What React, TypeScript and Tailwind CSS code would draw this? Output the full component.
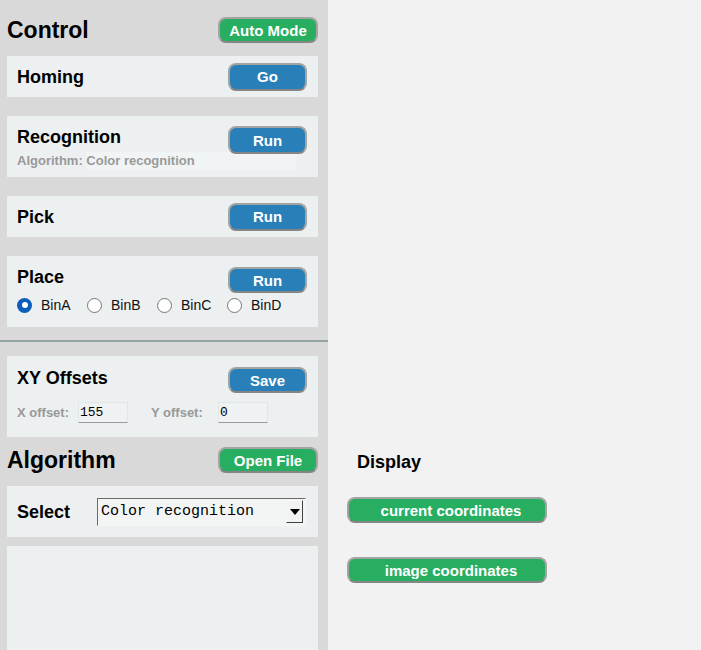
import React from "react";

const font = { fontFamily: '"Liberation Sans", Arial, sans-serif' };
const mono = { fontFamily: '"Liberation Mono", "Courier New", monospace' };

function Btn({
  label,
  color,
  className = "",
}: {
  label: string;
  color: "blue" | "green";
  className?: string;
}) {
  const bg = color === "blue" ? "bg-[#2980b9]" : "bg-[#27ae60]";
  return (
    <button
      className={`${bg} ${className} relative z-10 flex items-center justify-center rounded-lg border-2 border-[#a3a3a3] border-b-[#858585] text-[15px] font-bold leading-none text-white`}
    >
      {label}
    </button>
  );
}

function Radio({ label, checked }: { label: string; checked?: boolean }) {
  return (
    <label className="flex w-[70px] items-center">
      {checked ? (
        <span className="flex h-[15px] w-[15px] items-center justify-center rounded-full bg-[#0b5fba]">
          <span className="h-[6px] w-[6px] rounded-full bg-white" />
        </span>
      ) : (
        <span className="h-[15px] w-[15px] rounded-full border border-[#767676] bg-white" />
      )}
      <span className="ml-[9px] text-[14px] leading-none text-[#111]">{label}</span>
    </label>
  );
}

export default function App() {
  return (
    <div className="flex h-screen w-full overflow-hidden text-black" style={font}>
      {/* left control column */}
      <div className="w-[328px] shrink-0 bg-[#d9d9d9] pl-[7px] pr-[10px] pt-[17px]">
        <div className="flex h-[26px] items-center justify-between">
          <h1 className="text-[23px] font-bold leading-none">Control</h1>
          <Btn label="Auto Mode" color="green" className="h-[26px] w-[100px]" />
        </div>

        <div className="mt-[13px] flex h-[41px] items-center justify-between bg-[#ecf0f1] pl-[10px] pr-[11px]">
          <span className="text-[18px] font-bold leading-none">Homing</span>
          <Btn label="Go" color="blue" className="h-[28px] w-[79px]" />
        </div>

        <div className="mt-[19px] h-[61px] bg-[#ecf0f1] pl-[10px] pr-[11px] pt-[10px]">
          <div className="flex items-start justify-between">
            <span className="mt-[2px] text-[18px] font-bold leading-[18px]">Recognition</span>
            <Btn label="Run" color="blue" className="h-[28px] w-[79px]" />
          </div>
          <div className="-mt-[2px] flex h-[18px] items-center text-[13px] font-bold text-[#999]">
            <span>Algorithm:&nbsp;</span>
            <input
              readOnly
              value="Color recognition"
              className="h-[18px] w-[210px] bg-[#f1f4f4] p-0 text-[13px] font-bold text-[#999] outline-none"
              style={font}
            />
          </div>
        </div>

        <div className="mt-[19px] flex h-[41px] items-center justify-between bg-[#ecf0f1] pl-[10px] pr-[11px]">
          <span className="text-[18px] font-bold leading-none">Pick</span>
          <Btn label="Run" color="blue" className="h-[28px] w-[79px]" />
        </div>

        <div className="mt-[19px] h-[71px] bg-[#ecf0f1] pl-[10px] pr-[11px] pt-[11px]">
          <div className="flex items-start justify-between">
            <span className="mt-[1px] text-[18px] font-bold leading-[18px]">Place</span>
            <Btn label="Run" color="blue" className="h-[26px] w-[79px]" />
          </div>
          <div className="mt-[4px] flex h-[16px] items-center">
            <Radio label="BinA" checked />
            <Radio label="BinB" />
            <Radio label="BinC" />
            <Radio label="BinD" />
          </div>
        </div>

        <div className="-ml-[7px] -mr-[10px] mt-[13px] h-[2px] bg-[#95a5a6]" />

        <div className="mt-[14px] h-[81px] bg-[#ecf0f1] pl-[10px] pr-[11px] pt-[11px]">
          <div className="flex items-start justify-between">
            <span className="mt-[2px] text-[18px] font-bold leading-[18px]">XY Offsets</span>
            <Btn label="Save" color="blue" className="h-[26px] w-[79px]" />
          </div>
          <div className="mt-[9px] flex h-[21px] items-center text-[13px] font-bold text-[#999]">
            <span className="w-[61px]">X offset:</span>
            <input
              readOnly
              value="155"
              className="h-[21px] w-[50px] border border-[#e2e6e7] border-b-[#9a9a9a] bg-[#eef2f3] px-[1px] text-[13px] font-normal text-black outline-none"
              style={mono}
            />
            <span className="ml-[23px] w-[67px]">Y offset:</span>
            <input
              readOnly
              value="0"
              className="h-[21px] w-[50px] border border-[#e2e6e7] border-b-[#9a9a9a] bg-[#eef2f3] px-[1px] text-[13px] font-normal text-black outline-none"
              style={mono}
            />
          </div>
        </div>

        <div className="mt-[10px] flex h-[26px] items-center justify-between">
          <h2 className="text-[23px] font-bold leading-none">Algorithm</h2>
          <Btn label="Open File" color="green" className="h-[26px] w-[100px]" />
        </div>

        <div className="mt-[13px] flex h-[51px] items-center bg-[#ecf0f1] pl-[10px]">
          <span className="w-[80px] text-[18px] font-bold leading-none">Select</span>
          <div className="flex h-[28px] w-[209px] items-center justify-between border border-[#6b6b6b] border-b-[#f5f5f5] border-r-[#f5f5f5] bg-[#f3f5f5] pl-[3px] pr-[2px]">
            <span className="text-[15px] leading-none text-black" style={mono}>
              Color recognition
            </span>
            <span className="flex h-[23px] w-[17px] items-center justify-center border border-[#f8f8f8] border-b-[#404040] border-r-[#404040] bg-[#f3f3f3]">
              <svg width="10" height="6" viewBox="0 0 10 6">
                <path d="M0 0h10L5 6z" fill="#000" />
              </svg>
            </span>
          </div>
        </div>

        <div className="mt-[9px] h-[120px] bg-[#ecf0f1]" />
      </div>

      {/* right display area */}
      <div className="flex-1 bg-[#f2f2f2] pl-[19px] pt-[453px]">
        <div className="ml-[10px] text-[18px] font-bold leading-[18px]">Display</div>
        <Btn
          label="current coordinates"
          color="green"
          className="mt-[26px] h-[26px] w-[200px] pl-[8px]"
        />
        <Btn
          label="image coordinates"
          color="green"
          className="mt-[34px] h-[26px] w-[200px] pl-[8px]"
        />
      </div>
    </div>
  );
}
